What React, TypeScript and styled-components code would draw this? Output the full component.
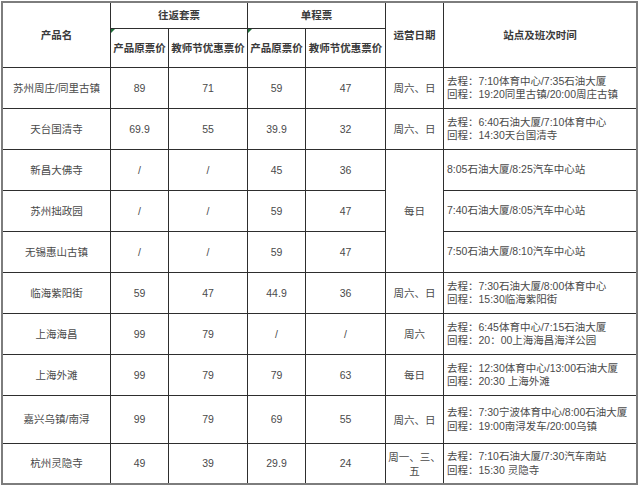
import React from "react";
import styled, { createGlobalStyle } from "styled-components";

type Row = {
  name: string;
  rt: [string, string];
  single: [string, string];
  date?: string;
  dateSpan?: number;
  schedule: string[];
};

const rows: Row[] = [
  {
    name: "苏州周庄/同里古镇",
    rt: ["89", "71"],
    single: ["59", "47"],
    date: "周六、日",
    schedule: ["去程：7:10体育中心/7:35石油大厦", "回程：19:20同里古镇/20:00周庄古镇"],
  },
  {
    name: "天台国清寺",
    rt: ["69.9", "55"],
    single: ["39.9", "32"],
    date: "周六、日",
    schedule: ["去程：6:40石油大厦/7:10体育中心", "回程：14:30天台国清寺"],
  },
  {
    name: "新昌大佛寺",
    rt: ["/", "/"],
    single: ["45", "36"],
    date: "每日",
    dateSpan: 3,
    schedule: ["8:05石油大厦/8:25汽车中心站"],
  },
  {
    name: "苏州拙政园",
    rt: ["/", "/"],
    single: ["59", "47"],
    schedule: ["7:40石油大厦/8:05汽车中心站"],
  },
  {
    name: "无锡惠山古镇",
    rt: ["/", "/"],
    single: ["59", "47"],
    schedule: ["7:50石油大厦/8:10汽车中心站"],
  },
  {
    name: "临海紫阳街",
    rt: ["59", "47"],
    single: ["44.9", "36"],
    date: "周六、日",
    schedule: ["去程：7:30石油大厦/8:00体育中心", "回程：15:30临海紫阳街"],
  },
  {
    name: "上海海昌",
    rt: ["99", "79"],
    single: ["/", "/"],
    date: "周六",
    schedule: ["去程：6:45体育中心/7:15石油大厦", "回程：20：00上海海昌海洋公园"],
  },
  {
    name: "上海外滩",
    rt: ["99", "79"],
    single: ["79", "63"],
    date: "每日",
    schedule: ["去程：12:30体育中心/13:00石油大厦", "回程：20:30 上海外滩"],
  },
  {
    name: "嘉兴乌镇/南浔",
    rt: ["99", "79"],
    single: ["69", "55"],
    date: "周六、日",
    schedule: ["去程：7:30宁波体育中心/8:00石油大厦", "回程：19:00南浔发车/20:00乌镇"],
  },
  {
    name: "杭州灵隐寺",
    rt: ["49", "39"],
    single: ["29.9", "24"],
    date: "周一、三、五",
    schedule: ["去程：7:10石油大厦/7:30汽车南站", "回程：15:30 灵隐寺"],
  },
];

const GlobalStyle = createGlobalStyle`
  html, body {
    margin: 0;
    padding: 0;
    background: #fff;
  }
  body {
    font-family: "Liberation Sans", "Noto Sans CJK SC", sans-serif;
  }
`;

const Sheet = styled.div`
  margin: 1px 0 0 1px;
  width: 633px;
  display: grid;
  grid-template-columns: 107px 57px 78px 57px 79px 57px 192px;
  grid-template-rows: 25px 38px repeat(8, 40px) 47px 39px;
  gap: 1px;
  background: #2e2e2e;
  border: 2px solid #7d7d7d;
  font-size: 10.5px;
  color: #4a4a4a;
`;

const Cell = styled.div<{ $rows?: number; $cols?: number }>`
  background: #fff;
  display: flex;
  align-items: center;
  justify-content: center;
  text-align: center;
  padding: 0 2px;
  line-height: 13px;
  ${(p) => (p.$rows ? `grid-row: span ${p.$rows};` : "")}
  ${(p) => (p.$cols ? `grid-column: span ${p.$cols};` : "")}
`;

const HeadCell = styled(Cell)<{ $marked?: boolean }>`
  position: relative;
  font-weight: 700;
  color: #3a3a3a;
  white-space: nowrap;
  padding: 0;

  &::before {
    content: "";
    display: ${(p) => (p.$marked ? "block" : "none")};
    position: absolute;
    left: 0;
    top: 0;
    border-top: 4px solid #1f6e3a;
    border-right: 4px solid transparent;
  }
`;

const NameCell = styled(Cell)`
  white-space: nowrap;
`;

const DateCell = styled(Cell)`
  padding: 0;
  line-height: 14px;
`;

const ScheduleCell = styled(Cell)`
  flex-direction: column;
  align-items: flex-start;
  justify-content: center;
  text-align: left;
  padding: 0 0 0 3px;
  line-height: 13.5px;
  white-space: nowrap;
`;

export default function App() {
  return (
    <>
      <GlobalStyle />
      <Sheet>
        <HeadCell $rows={2}>产品名</HeadCell>
        <HeadCell $cols={2}>往返套票</HeadCell>
        <HeadCell $cols={2}>单程票</HeadCell>
        <HeadCell $rows={2}>运营日期</HeadCell>
        <HeadCell $rows={2}>站点及班次时间</HeadCell>
        <HeadCell $marked>产品原票价</HeadCell>
        <HeadCell>教师节优惠票价</HeadCell>
        <HeadCell $marked>产品原票价</HeadCell>
        <HeadCell>教师节优惠票价</HeadCell>

        {rows.map((r) => (
          <React.Fragment key={r.name}>
            <NameCell>{r.name}</NameCell>
            <Cell>{r.rt[0]}</Cell>
            <Cell>{r.rt[1]}</Cell>
            <Cell>{r.single[0]}</Cell>
            <Cell>{r.single[1]}</Cell>
            {r.date && <DateCell $rows={r.dateSpan}>{r.date}</DateCell>}
            <ScheduleCell>
              {r.schedule.map((line) => (
                <span key={line}>{line}</span>
              ))}
            </ScheduleCell>
          </React.Fragment>
        ))}
      </Sheet>
    </>
  );
}
